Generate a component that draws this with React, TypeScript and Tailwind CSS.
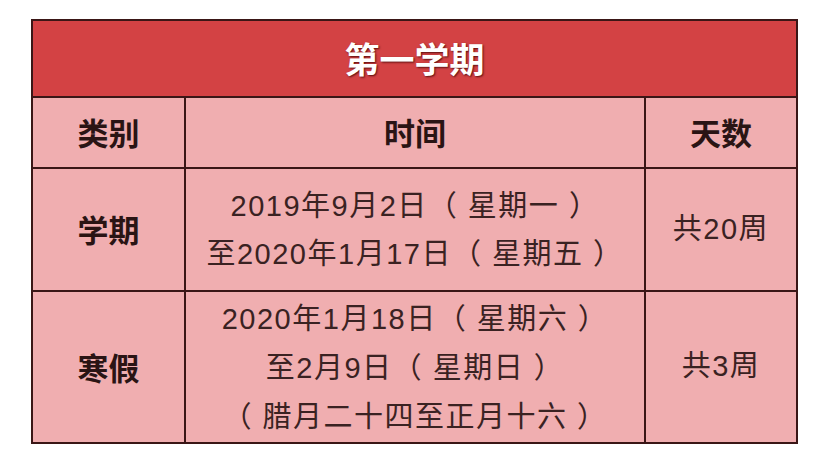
import React from "react";

export default function App() {
  const font = { fontFamily: '"Noto Sans CJK SC", "Noto Sans", sans-serif' };
  const body = { fontFamily: '"Liberation Sans", "Noto Sans CJK TC", sans-serif' };
  const cell = "border-[#3a1616] flex items-center justify-center text-center";
  return (
    <div className="w-[828px] h-[456px] bg-white pt-[19px] pl-[31px]" style={font}>
      <div className="w-[767px] border-2 border-[#3a1616] bg-[#f0aeb0] text-[#2a1414]">
        <div className="h-[77px] bg-[#d34244] border-b-2 border-[#3a1616] flex items-center justify-center">
          <span className="text-white text-[35px] font-bold [text-shadow:1px_1px_2px_rgba(60,0,0,0.8)]">第一学期</span>
        </div>
        <div className="grid grid-cols-[153px_460px_1fr]">
          <div className={`${cell} h-[71px] border-r-2 border-b-2 text-[31px] font-bold`}>类别</div>
          <div className={`${cell} h-[71px] border-r-2 border-b-2 text-[31px] font-bold`}>时间</div>
          <div className={`${cell} h-[71px] border-b-2 text-[31px] font-bold`}>天数</div>

          <div className={`${cell} h-[123px] border-r-2 border-b-2 text-[31px] font-bold`}>学期</div>
          <div className={`${cell} h-[123px] border-r-2 border-b-2 flex-col text-[29px] leading-[48px] tracking-[1.5px] text-[#3a2222] whitespace-pre`} style={body}>
            <div>2019年9月2日（ 星期一 ）</div>
            <div>至2020年1月17日（ 星期五 ）</div>
          </div>
          <div className={`${cell} h-[123px] border-b-2 text-[29px] tracking-[1.5px] text-[#3a2222]`} style={body}>共20周</div>

          <div className={`${cell} h-[150px] border-r-2 text-[31px] font-bold`}>寒假</div>
          <div className={`${cell} h-[150px] border-r-2 flex-col pt-[2px] text-[29px] leading-[49px] tracking-[1.5px] text-[#3a2222] whitespace-pre`} style={body}>
            <div>2020年1月18日（ 星期六 ）</div>
            <div>至2月9日（ 星期日 ）</div>
            <div>（ 腊月二十四至正月十六 ）</div>
          </div>
          <div className={`${cell} h-[150px] text-[29px] tracking-[1.5px] text-[#3a2222]`} style={body}>共3周</div>
        </div>
      </div>
    </div>
  );
}
